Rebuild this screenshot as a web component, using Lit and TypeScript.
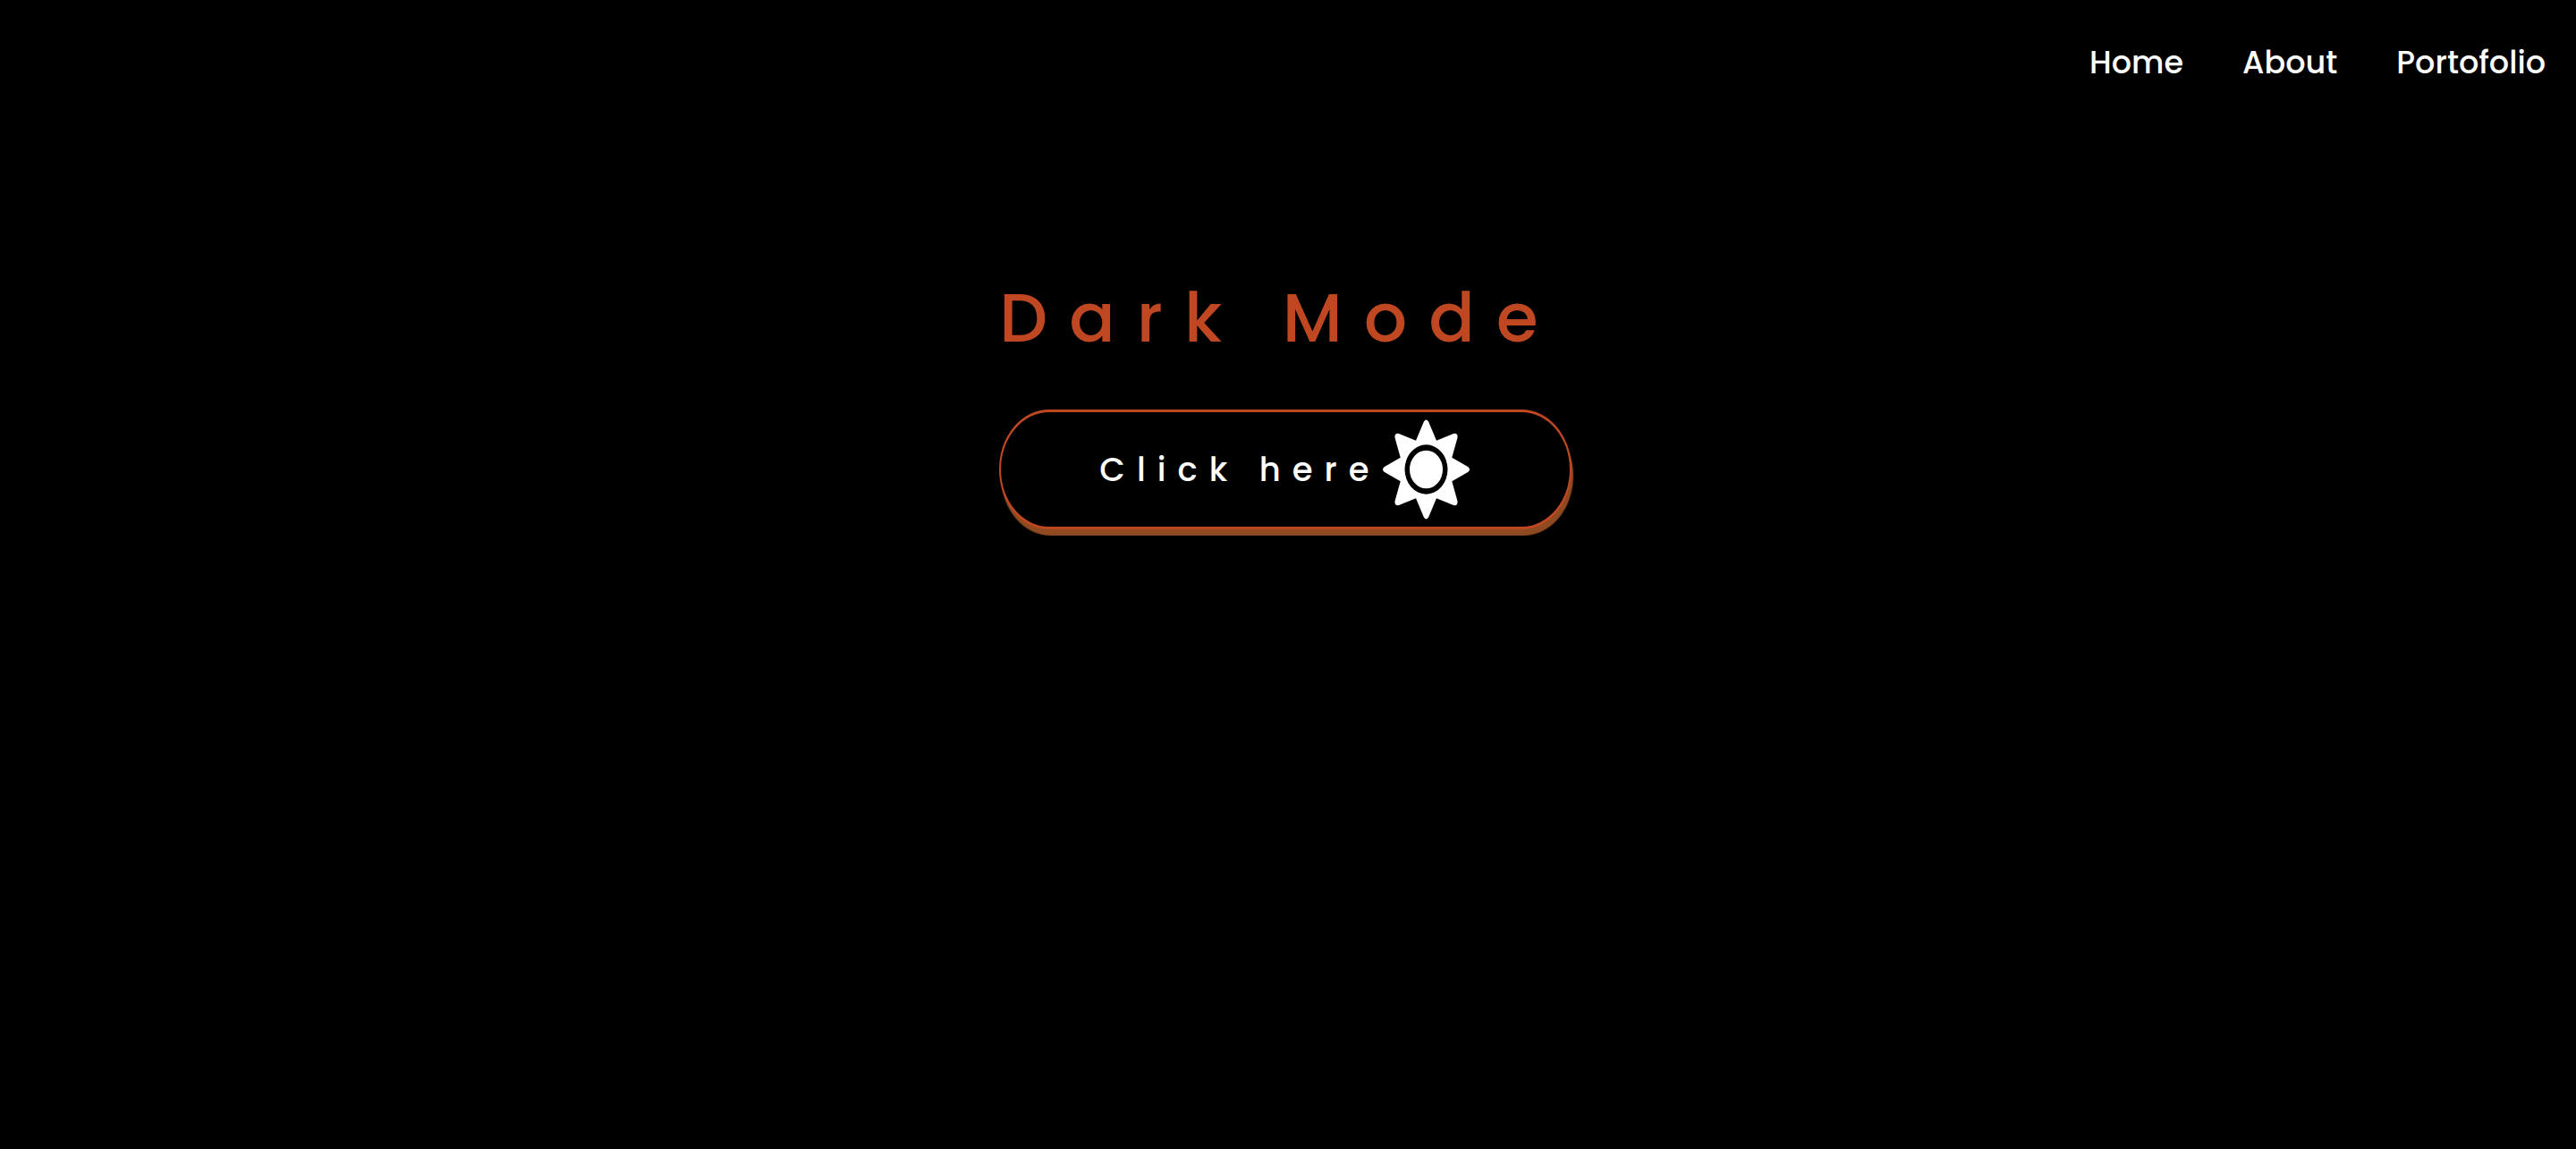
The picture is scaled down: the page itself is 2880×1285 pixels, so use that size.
import { LitElement, html, css } from "lit";
import { customElement } from "lit/decorators.js";

@customElement("app-root")
export class AppRoot extends LitElement {
  static styles = css`
    :host {
      display: flex;
      flex-direction: column;
      min-height: 100vh;
      box-sizing: border-box;
      background: #000;
      color: #fff;
      font-family: "Poppins", "Inter", sans-serif;
      font-feature-settings: "cv11";
    }
    .nav {
      display: flex;
      justify-content: flex-end;
      gap: 66px;
      padding: 42px 34px;
    }
    .link {
      color: inherit;
      font-size: 35px;
      font-weight: 500;
      line-height: 56px;
      text-decoration: none;
    }
    .main {
      display: flex;
      justify-content: center;
      padding: 156px 6px 0 0;
    }
    .hero {
      display: grid;
      gap: 42px;
      justify-items: start;
    }
    .title {
      margin: 0;
      color: #bf4722;
      font-size: 76px;
      font-weight: 500;
      line-height: 120px;
      letter-spacing: 24px;
      white-space: nowrap;
    }
    .toggle {
      display: flex;
      align-items: center;
      padding: 8px 110px;
      border: solid #bf4722;
      border-width: 3px 2px;
      border-radius: 56px / 67px;
      background: #000;
      box-shadow: 2px 7px 1px #8f4a20;
      color: inherit;
      font: inherit;
      font-size: 37px;
      font-weight: 500;
      line-height: 56px;
      letter-spacing: 13px;
      white-space: nowrap;
      cursor: pointer;
    }
    .sun {
      display: block;
      width: 101px;
      height: 112px;
      fill: currentColor;
    }
  `;

  render() {
    return html`
      <nav class="nav">
        <a class="link" href="#home">Home</a>
        <a class="link" href="#about">About</a>
        <a class="link" href="#portofolio">Portofolio</a>
      </nav>
      <main class="main">
        <div class="hero">
          <h1 class="title">Dark Mode</h1>
          <button class="toggle" type="button">
            <span>Click here</span>
            <svg class="sun" viewBox="-50 -56 100 112" aria-hidden="true">
              <path
                fill-rule="evenodd"
                d="M-2.6-53.5Q0-57.5 2.6-53.5L11.5-32.3L30.5-40Q35.5-41 35-35.5L28.8-13.3L47-2.8Q50 0 47 2.8L28.8 13.3L35 35.5Q35.5 41 30.5 40L11.5 32.3L2.6 53.5Q0 57.5-2.6 53.5L-11.5 32.3L-30.5 40Q-35.5 41-35 35.5L-28.8 13.3L-47 2.8Q-50 0-47-2.8L-28.8-13.3L-35-35.5Q-35.5-41-30.5-40L-11.5-32.3ZM-24 0A24 27.7 0 1 0 24 0A24 27.7 0 1 0-24 0Z"
              />
              <ellipse rx="18.5" ry="21.3" />
            </svg>
          </button>
        </div>
      </main>
    `;
  }
}
